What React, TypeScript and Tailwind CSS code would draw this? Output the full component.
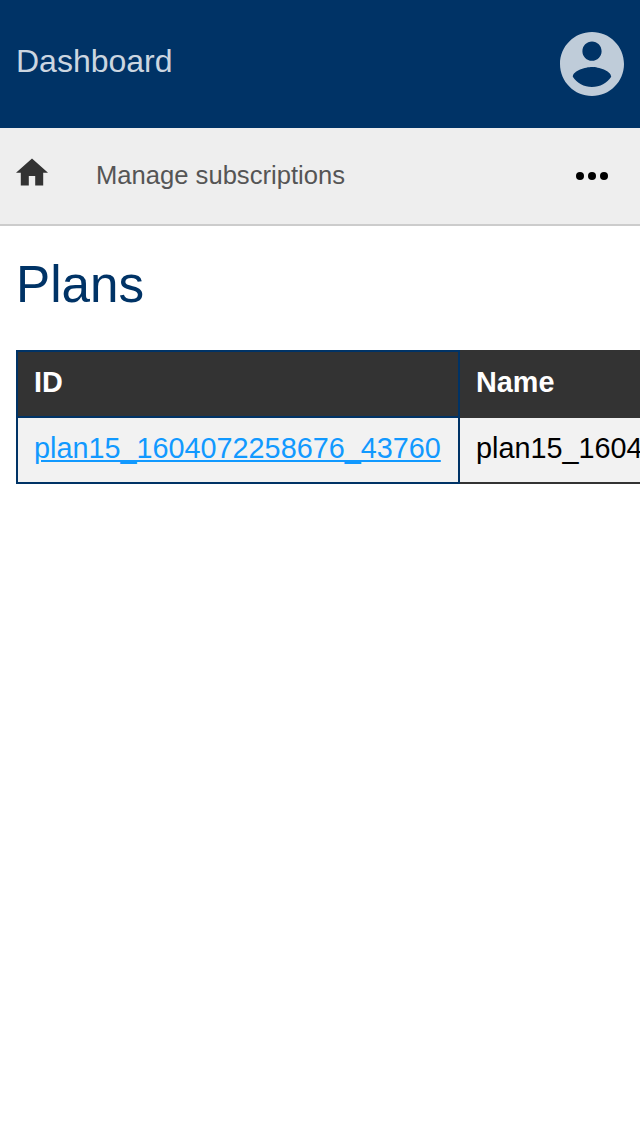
const plan = "plan15_1604072258676_43760";

export default function App() {
  return (
    <div className="h-[1136px] w-[640px] overflow-hidden bg-white font-['Liberation_Sans',Arial,sans-serif] text-black">
      <header className="flex h-32 items-center justify-between bg-[#003366] px-4">
        <h1 className="pb-1.5 text-[32px] leading-9 text-[#ccd6e0]">Dashboard</h1>
        <svg className="h-16 w-16" viewBox="2 2 20 20" fill="#bfccd9" aria-hidden="true">
          <path d="M12 2C6.480 2 2 6.480 2 12s4.480 10 10 10 10-4.480 10-10S17.520 2 12 2zm0 3c1.660 0 3 1.340 3 3s-1.340 3-3 3-3-1.340-3-3 1.340-3 3-3zm0 14.200c-2.500 0-4.710-1.280-6-3.220.030-1.990 4-3.080 6-3.080 1.990 0 5.970 1.090 6 3.080-1.290 1.940-3.500 3.220-6 3.220z" />
        </svg>
      </header>
      <nav className="flex h-[98px] items-center border-b-2 border-[#cccccc] bg-[#eeeeee] px-4">
        <svg className="mb-2 h-7 w-8" viewBox="2 3 20 17" fill="#333333" aria-hidden="true">
          <path d="M10 20v-6h4v6h5v-8h3L12 3 2 12h3v8z" />
        </svg>
        <span className="ml-12 pb-0.5 text-[25.6px] leading-8 text-[#555555]">Manage subscriptions</span>
        <svg className="mr-4 ml-auto h-2 w-8" viewBox="0 0 32 8" aria-hidden="true">
          <circle cx="4" cy="4" r="4" />
          <circle cx="16" cy="4" r="4" />
          <circle cx="28" cy="4" r="4" />
        </svg>
      </nav>
      <main className="px-4 pt-[29px]">
        <h2 className="text-[51.2px] leading-[60px] text-[#003366]">Plans</h2>
        <table className="mt-[35px] w-[884px] table-fixed border-collapse border-2 border-[#333333] text-left text-[28.8px] leading-8">
          <thead>
            <tr className="h-[66px] bg-[#333333] align-top text-white">
              <th className="w-[442px] border-2 border-[#003366] px-4 pt-[14px] pb-0 font-bold">ID</th>
              <th className="border-y-2 border-[#333333] px-4 pt-[14px] pb-0 font-bold">Name</th>
            </tr>
          </thead>
          <tbody>
            <tr className="h-[66px] bg-[#f2f2f2] align-top">
              <td className="border-2 border-[#003366] px-4 pt-[14px] pb-0">
                <a href="#plan" className="text-[#1199ff] underline">{plan}</a>
              </td>
              <td className="border-y-2 border-[#333333] px-4 pt-[14px] pb-0">{plan}</td>
            </tr>
          </tbody>
        </table>
      </main>
    </div>
  );
}
